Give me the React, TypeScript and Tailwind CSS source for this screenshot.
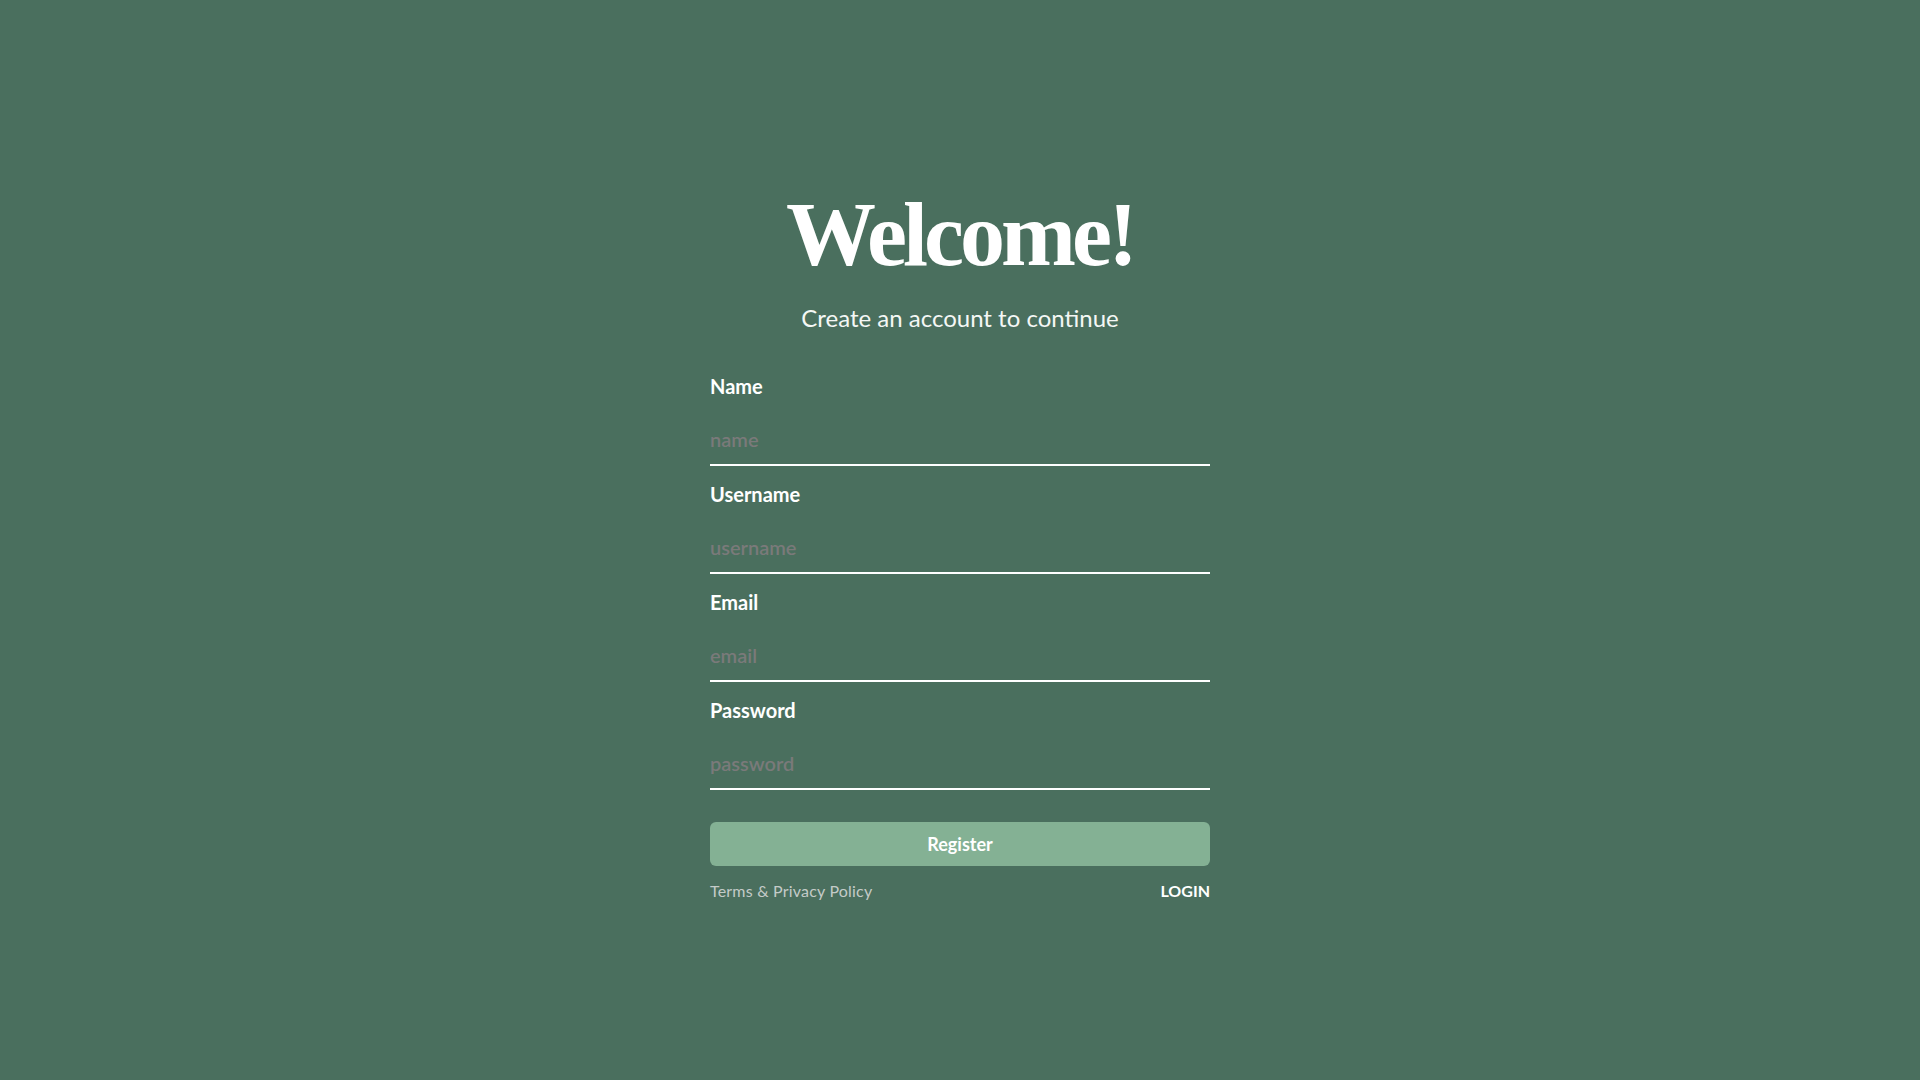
const fields = [
  { label: "Name", placeholder: "name", type: "text" },
  { label: "Username", placeholder: "username", type: "text" },
  { label: "Email", placeholder: "email", type: "email" },
  { label: "Password", placeholder: "password", type: "password" },
];

const App = () => {
  return (
    <div className="min-h-screen bg-[#4a6f5e] font-['Lato',sans-serif] text-white flex flex-col items-center pt-[190px]">
      <h1 className="font-['Liberation_Serif',serif] font-bold text-[90px] leading-none tracking-[-4px]">
        Welcome!
      </h1>
      <p className="mt-[22px] text-[24px] leading-8 text-[#f4f7f5]">
        Create an account to continue
      </p>

      <form className="w-[500px] mt-[38px] flex flex-col" onSubmit={(e) => e.preventDefault()}>
        <div className="flex flex-col gap-[14px]">
          {fields.map((f) => (
            <label key={f.label} className="flex flex-col">
              <span className="text-[20px] leading-7 font-bold">{f.label}</span>
              <input
                type={f.type}
                placeholder={f.placeholder}
                className="h-[66px] pt-[14px] bg-transparent border-b-2 border-white font-['Lato',sans-serif] text-[20px] font-semibold text-white placeholder:text-[#7a7a7a] outline-none"
              />
            </label>
          ))}
        </div>

        <button
          type="submit"
          className="mt-8 h-11 w-full rounded-md bg-[#84b194] text-[18px] font-bold text-white"
        >
          Register
        </button>

        <div className="mt-[13px] flex justify-between items-center text-[16px] leading-6">
          <a href="#" className="text-[#c4cbc8] tracking-[0.2px]">
            Terms &amp; Privacy Policy
          </a>
          <a href="#" className="font-bold text-white">
            LOGIN
          </a>
        </div>
      </form>
    </div>
  );
};

export default App;
